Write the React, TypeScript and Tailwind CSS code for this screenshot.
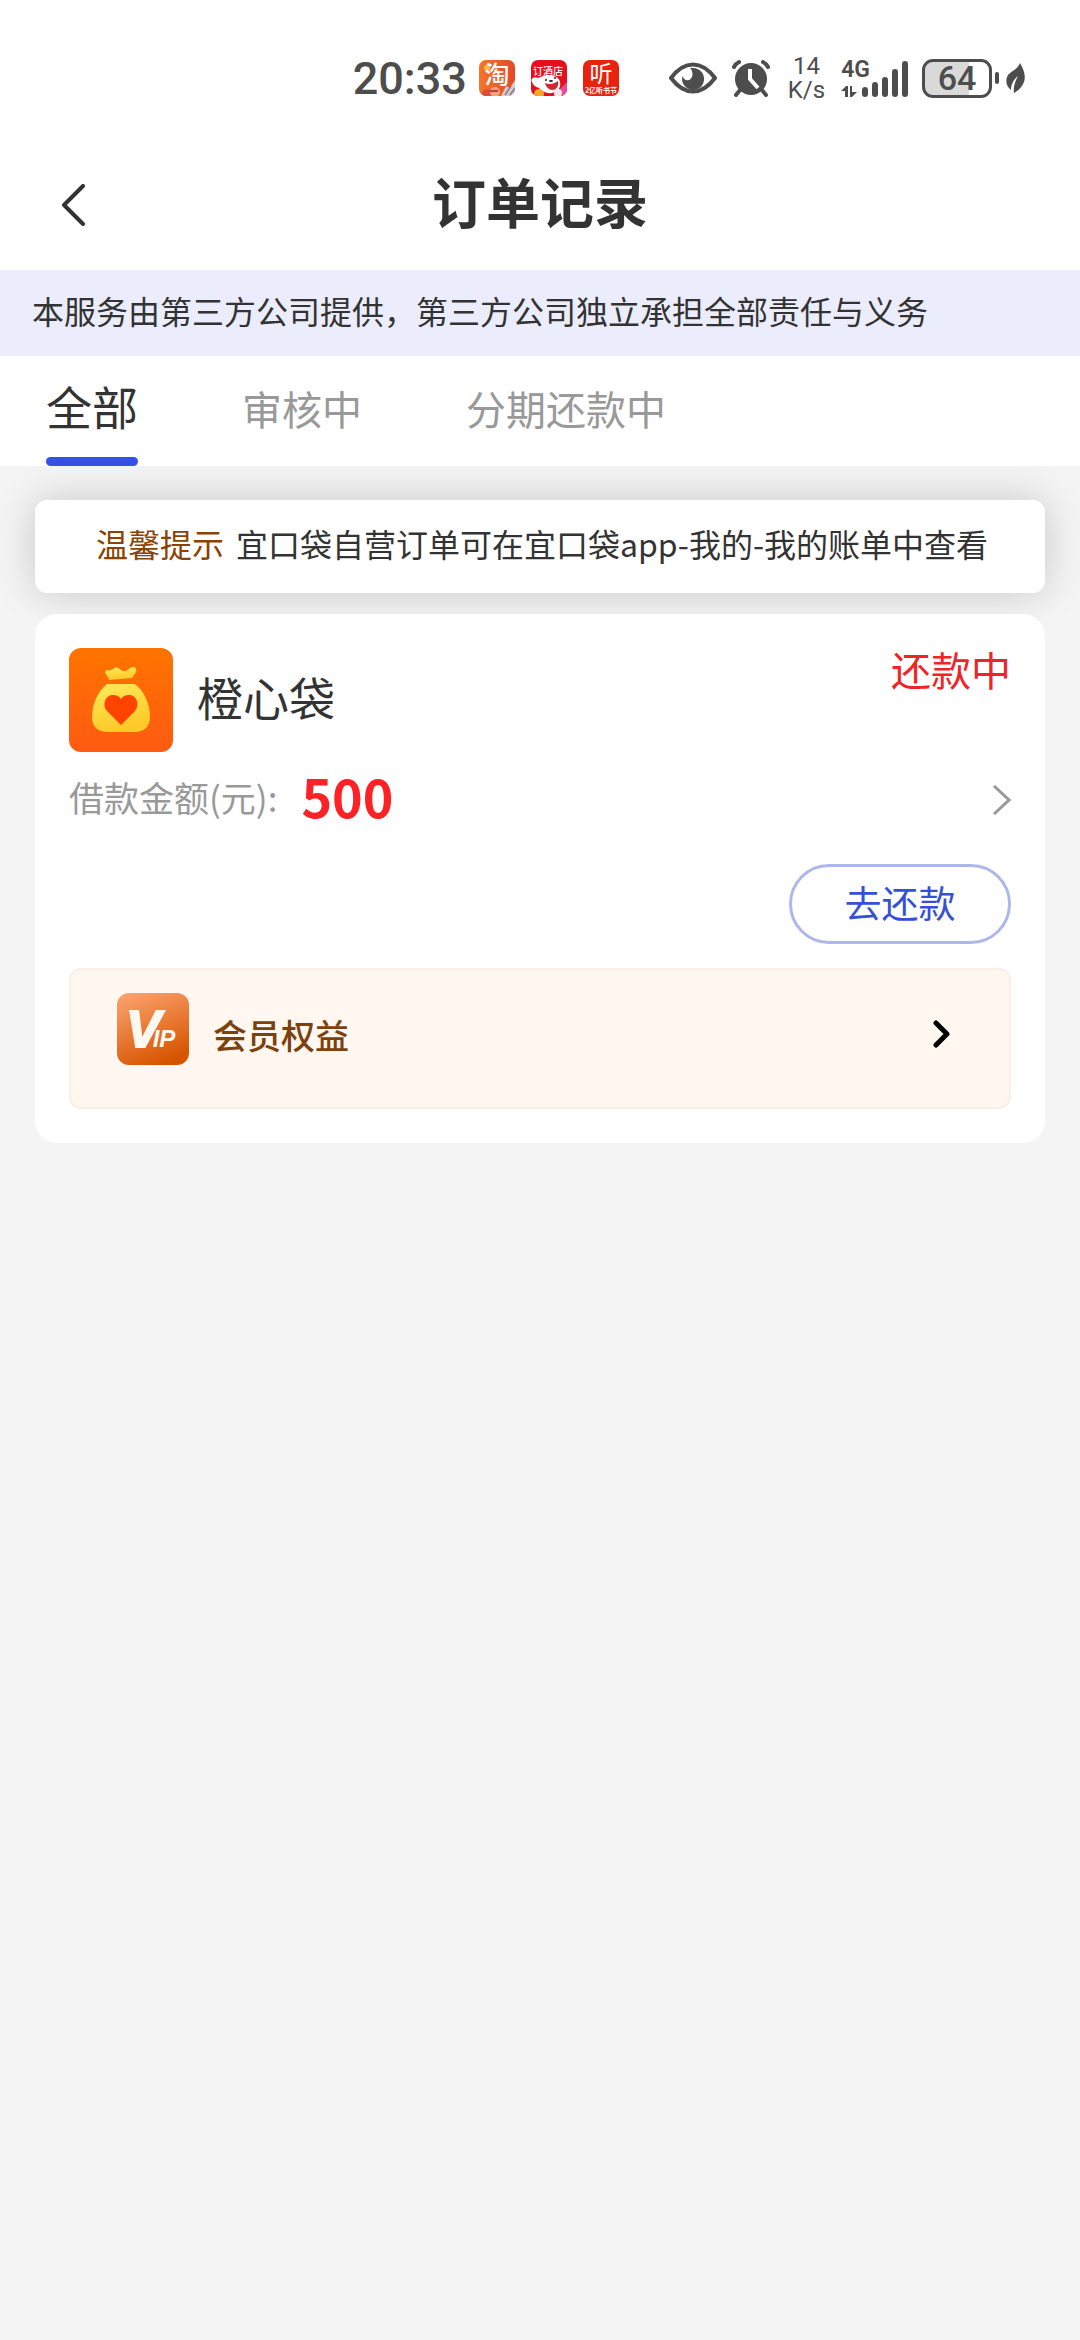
import { useState } from "react";

const tabs = ["全部", "审核中", "分期还款中"];

const barHeights = [10, 15, 20, 28, 36];

function AppBadges() {
  return (
    <div className="flex gap-4">
      <svg viewBox="0 0 36 36" className="size-9 overflow-visible" role="img" aria-label="淘">
        <defs>
          <clipPath id="tao">
            <rect width="36" height="36" rx="7" />
          </clipPath>
          <linearGradient id="taoBg" x1="0" y1="0" x2="1" y2="0">
            <stop offset="0" stopColor="#f4762a" />
            <stop offset="1" stopColor="#e8452a" />
          </linearGradient>
        </defs>
        <g clipPath="url(#tao)">
          <rect width="36" height="36" fill="url(#taoBg)" />
          <circle cx="8" cy="8" r="3" fill="#ffb84d" />
          <circle cx="8" cy="34" r="5" fill="#d8503c" />
          <circle cx="16" cy="32" r="5" fill="#f0a27c" />
          <path d="M22 36l5-10 4 2 5-8v16z" fill="#dfc9c0" />
          <path d="M26 35l6-9M31 35l5-7" stroke="#6f7fa8" strokeWidth="1.5" />
          <path d="M11 31h8" stroke="#c43c3c" strokeWidth="2" />
        </g>
        <text x="18" y="24" textAnchor="middle" fontSize="25" fontWeight="500" fill="#fff">
          淘
        </text>
      </svg>
      <svg viewBox="0 0 36 36" className="size-9 overflow-visible" role="img" aria-label="订酒店">
        <defs>
          <clipPath id="hotel">
            <rect width="36" height="36" rx="7" />
          </clipPath>
        </defs>
        <g clipPath="url(#hotel)">
          <rect width="36" height="36" fill="#e60f1e" />
          <path d="M22 36l14-14v14z" fill="#e84a9c" />
          <path d="M1 22c-2-3 2-6 6-4 5-3 14-4 18-1 5 2 6 10 1 14-6 4-14 2-18-3-4-1-6-3-7-6z" fill="#fff" />
          <path d="M14 23c4 2 9 1 13-2 1 6-2 9-6 9-3 0-6-3-7-7z" fill="#d22633" />
          <circle cx="15" cy="20" r="1" fill="#222" />
          <circle cx="24" cy="18" r="1" fill="#222" />
          <ellipse cx="20" cy="21" rx="2" ry="1" fill="#222" />
          <circle cx="8" cy="34" r="5" fill="#f8a928" />
          <circle cx="27" cy="33" r="4" fill="#fbe3ea" />
        </g>
        <text x="17" y="15" textAnchor="middle" fontSize="10" fontWeight="500" fill="#fff">
          订酒店
        </text>
      </svg>
      <svg viewBox="0 0 36 36" className="size-9 overflow-visible" role="img" aria-label="听">
        <rect width="36" height="36" rx="7" fill="#e8220c" />
        <text x="18" y="22" textAnchor="middle" fontSize="23" fill="#fff">
          听
        </text>
        <text x="18" y="33" textAnchor="middle" fontSize="7" fontWeight="700" fill="#fff">
          2亿听书节
        </text>
      </svg>
    </div>
  );
}

function StatusBar() {
  return (
    <div className="flex h-[156px] items-center justify-end pr-[54px] text-[#4d4d4d]">
      <span className="mr-3 font-[Roboto] text-[45px] leading-none font-medium">20:33</span>
      <AppBadges />

      <svg viewBox="0 0 48 32" className="ml-[50px] h-8 w-12" fill="none">
        <path
          d="M2 16C8 8 15 2.500 24 2.500S40 8 46 16C40 24 33 29.500 24 29.500S8 24 2 16z"
          stroke="currentColor"
          strokeWidth="4"
          strokeLinejoin="round"
        />
        <path d="M24 6a11 11 0 1 1-10.500 8c1.500 4 4 5 6.500 4 4-1.500 5-8 1-12z" fill="currentColor" />
      </svg>

      <svg viewBox="0 0 38 38" className="ml-[15px] size-[38px]" fill="none" stroke="currentColor" strokeLinecap="round">
        <circle cx="19" cy="20" r="16" fill="currentColor" stroke="none" />
        <path d="M2 8c1-2 3-4 5-5M36 8c-1-2-3-4-5-5" strokeWidth="4" />
        <path d="M8 31l-4 5M30 31l4 5" strokeWidth="4" />
        <path d="M18 10v10l8 9" stroke="#fff" strokeWidth="4" strokeLinecap="butt" />
      </svg>

      <div className="ml-[18px] flex flex-col items-center font-[Roboto] text-[24px] leading-[24px]">
        <span>14</span>
        <span>K/s</span>
      </div>

      <div className="ml-4 flex items-end">
        <div className="-mr-2 flex flex-col self-start">
          <span className="font-[Roboto] text-[23px] leading-[20px] font-semibold">4G</span>
          <svg viewBox="0 0 16 11" className="mt-[6px] h-[11px] w-4" fill="currentColor">
            <path d="M0 5l5-5h2v11H4V5zM9 0h2v6h5l-5 5H9z" />
          </svg>
        </div>
        <svg viewBox="0 0 46 36" className="h-9 w-[46px]">
          {barHeights.map((h, i) => (
            <rect key={h} x={i * 10} y={36 - h} width="6" height={h} rx="3" fill="currentColor" />
          ))}
        </svg>
      </div>

      <div className="ml-[14px] flex h-[39px] w-[70px] items-center justify-center rounded-[11px] border-[3px] border-[#4d4d4d] bg-linear-to-r from-[#d9d9d9] from-68% to-white to-68% font-[Roboto] text-[34px] leading-none font-medium">
        64
      </div>
      <div className="ml-[3px] h-3 w-1 rounded-full bg-[#4d4d4d]" />
      <svg viewBox="0 0 20 30" className="ml-[7px] h-[30px] w-5">
        <path d="M14 0c4 7 6 13 4 19-2 5-6 9-10 11-1-7 2-13 4-17-5 4-7 9-7 14C0 23-1 17 2 12 5 8 11 7 14 0z" fill="currentColor" />
      </svg>
    </div>
  );
}

function MoneyBagIcon() {
  return (
    <svg viewBox="0 0 104 104" className="size-[104px]">
      <defs>
        <linearGradient id="bagBg" x1="0" y1="0" x2="0" y2="1">
          <stop offset="0" stopColor="#ff7400" />
          <stop offset="1" stopColor="#ff5a12" />
        </linearGradient>
        <linearGradient id="bag" x1="0" y1="0" x2="0.3" y2="1">
          <stop offset="0" stopColor="#ffea5a" />
          <stop offset="1" stopColor="#ffc928" />
        </linearGradient>
      </defs>
      <rect width="104" height="104" rx="12" fill="url(#bagBg)" />
      <path
        d="M40 32c-1-4-4-6-4-8 1-3 4-1 6-2 3-1 4-4 7-2 3 1 4 4 7 3 3 0 4-4 8-4 3 0 4 3 3 5l-4 6z"
        fill="url(#bag)"
      />
      <path d="M38 36h28c9 7 15 20 15 33 0 10-6 15-16 15H39c-10 0-16-5-16-15 0-13 6-26 15-33z" fill="url(#bag)" />
      <path d="M52 77L38 63c-5-6-2-16 6-16 4 0 6 1 8 4 2-3 4-4 8-4 8 0 11 10 6 16z" fill="#ff4400" />
    </svg>
  );
}

function VipIcon() {
  return (
    <svg viewBox="0 0 72 72" className="size-[72px]" role="img" aria-label="VIP">
      <defs>
        <linearGradient id="vipBg" x1="0.2" y1="0" x2="0.6" y2="1">
          <stop offset="0" stopColor="#fba06c" />
          <stop offset="1" stopColor="#d65400" />
        </linearGradient>
      </defs>
      <rect width="72" height="72" rx="12" fill="url(#vipBg)" />
      <path d="M12 17h10v4H13z" fill="#fff8f0" />
      <text
        x="9"
        y="54"
        fontSize="52"
        fontFamily="Liberation Sans, sans-serif"
        fontStyle="italic"
        fontWeight="700"
        fill="#fff8f0"
        stroke="#fff8f0"
        strokeWidth="2"
      >
        V
        <tspan dx="-8" fontSize="24" strokeWidth="0">
          IP
        </tspan>
      </text>
    </svg>
  );
}

export default function App() {
  const [active, setActive] = useState(0);

  return (
    <div lang="zh-CN" className="min-h-screen bg-[#f4f4f4] font-['Noto_Sans_CJK_SC',sans-serif] text-[#333]">
      <header className="bg-white">
        <StatusBar />
        <div className="grid h-[114px] grid-cols-[1fr_auto_1fr] items-start px-[61px]">
          <button type="button" aria-label="返回" className="flex h-[98px] w-20 items-center">
            <svg viewBox="0 0 24 42" className="h-[42px] w-6" fill="none">
              <path d="M22 2L3 21l19 19" stroke="#333" strokeWidth="4" strokeLinecap="round" strokeLinejoin="round" />
            </svg>
          </button>
          <h1 className="text-[54px] leading-[90px] font-bold">订单记录</h1>
        </div>
      </header>

      <p className="bg-[#ebedfd] px-8 pb-[6px] text-[32px] leading-[80px] whitespace-nowrap">
        本服务由第三方公司提供，第三方公司独立承担全部责任与义务
      </p>

      <nav className="relative z-10 flex h-[110px] gap-[104px] bg-white px-[46px]">
        {tabs.map((tab, i) => (
          <button
            key={tab}
            type="button"
            onClick={() => setActive(i)}
            className={`flex flex-col items-center justify-between ${
              i === active ? "text-[46px] leading-[98px]" : "text-[40px] leading-[104px] text-[#999]"
            }`}
          >
            <span>{tab}</span>
            {i === active && <span className="h-[9px] w-full shrink-0 rounded-full bg-[#3550e6]" />}
          </button>
        ))}
      </nav>

      <main className="flex flex-col gap-[21px] px-[35px] pt-[34px]">
        <p className="rounded-xl bg-white pb-[6px] pl-1 text-center text-[32px] leading-[87px] whitespace-nowrap shadow-[0_0_40px_rgba(0,0,0,0.18)]">
          <span className="mr-3 text-[#8a4304]">温馨提示</span>
          宜口袋自营订单可在宜口袋app-我的-我的账单中查看
        </p>

        <section className="rounded-[22px] bg-white p-[34px]">
          <div className="flex items-start justify-between">
            <div className="flex items-center gap-6">
              <MoneyBagIcon />
              <h2 className="pb-2 text-[46px] leading-none">橙心袋</h2>
            </div>
            <span className="text-[40px] leading-[42px] text-[#ee2427]">还款中</span>
          </div>

          <button type="button" className="mt-2 flex h-20 w-full items-center">
            <span className="pb-[6px] text-[35px] text-[#999]">借款金额(元):</span>
            <strong className="ml-6 pb-2 text-[52px] leading-none font-bold text-[#fc2226]">500</strong>
            <svg viewBox="0 0 18 30" className="ml-auto h-[30px] w-[18px]" fill="none">
              <path d="M1 1l15 14L1 29" stroke="#999" strokeWidth="3" />
            </svg>
          </button>

          <div className="mt-6 flex justify-end">
            <button
              type="button"
              className="h-20 w-[222px] rounded-full border-[3px] border-[#adb8ea] pb-1 text-[37px] leading-none text-[#3550d8]"
            >
              去还款
            </button>
          </div>

          <button
            type="button"
            className="mt-6 flex h-[141px] w-full items-start rounded-xl border-2 border-[#faeee5] bg-[#fff7f0] px-[46px] pt-[23px]"
          >
            <VipIcon />
            <span className="ml-6 text-[34px] leading-[84px] font-medium text-[#7c420d]">会员权益</span>
            <svg viewBox="0 0 18 28" className="mt-[27px] mr-3 ml-auto h-7 w-[18px]" fill="none">
              <path d="M3 3l11 11L3 25" stroke="#000" strokeWidth="5" strokeLinecap="round" strokeLinejoin="round" />
            </svg>
          </button>
        </section>
      </main>
    </div>
  );
}
